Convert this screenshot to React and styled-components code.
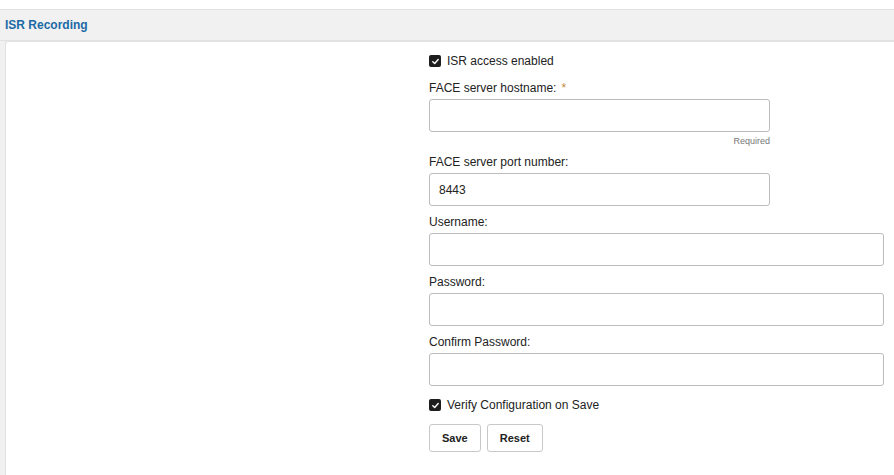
import React from "react";
import styled, { createGlobalStyle } from "styled-components";

const GlobalStyle = createGlobalStyle`
  html, body {
    margin: 0;
    padding: 0;
    background: #ffffff;
    font-family: "Liberation Sans", Arial, sans-serif;
    color: #222;
  }
`;

const Page = styled.div`
  padding-top: 9px;
  width: 894px;
  height: 475px;
  box-sizing: border-box;
  overflow: hidden;
`;

const Section = styled.section`
  background: #f1f1f1;
  border-top: 1px solid #e2e2e2;
  padding-left: 5px;
  height: 100%;
`;

const Header = styled.div`
  height: 30px;
  display: flex;
  align-items: center;
  border-bottom: 1px solid #e2e2e2;
  margin-left: -5px;
  padding-left: 5px;
`;

const Title = styled.h2`
  margin: 0;
  font-size: 12px;
  font-weight: bold;
  color: #1b6aa5;
`;

const Panel = styled.div`
  background: #fff;
  border-left: 1px solid #e2e2e2;
  border-top: 1px solid #e2e2e2;
  border-top-left-radius: 3px;
  height: 100%;
  display: flex;
`;

const Spacer = styled.div`
  width: 423px;
  flex-shrink: 0;
`;

const Form = styled.form`
  width: 455px;
  padding-top: 11px;
  display: flex;
  flex-direction: column;
`;

const CheckRow = styled.label`
  display: flex;
  align-items: center;
  gap: 6px;
  height: 16px;
  font-size: 12px;
  margin-bottom: ${(p) => p.$mb || 0}px;
`;

const Box = styled.span`
  width: 12px;
  height: 12px;
  border-radius: 2px;
  background: #1e1e1e;
  display: inline-flex;
  align-items: center;
  justify-content: center;
`;

const Field = styled.div`
  display: flex;
  flex-direction: column;
  width: ${(p) => (p.$half ? "341px" : "455px")};
  margin-bottom: ${(p) => (p.$mb !== undefined ? p.$mb : 8)}px;
`;

const Label = styled.div`
  font-size: 12px;
  line-height: 16px;
  margin-bottom: 3px;
`;

const Star = styled.span`
  color: #c4883f;
  margin-left: 5px;
`;

const Input = styled.input`
  box-sizing: border-box;
  height: 33px;
  width: 100%;
  border: 1px solid #bcbcbc;
  border-radius: 3px;
  padding: 0 9px;
  font-family: "Liberation Sans", Arial, sans-serif;
  font-size: 12px;
  color: #222;
  outline: none;
`;

const Hint = styled.div`
  text-align: right;
  font-size: 9px;
  color: #777;
  line-height: 14px;
  margin-top: 2px;
`;

const Buttons = styled.div`
  display: flex;
  gap: 6px;
  margin-top: 11px;
`;

const Button = styled.button`
  height: 28px;
  padding: 0 ${(p) => p.$px || 12}px;
  background: #fff;
  border: 1px solid #c8c8c8;
  border-radius: 3px;
  font-family: "Liberation Sans", Arial, sans-serif;
  font-size: 11px;
  font-weight: bold;
  color: #222;
  cursor: pointer;
`;

const Check = () => (
  <Box>
    <svg width="9" height="9" viewBox="0 0 10 10">
      <path d="M2 5.2 L4.1 7.2 L8 2.8" fill="none" stroke="#fff" strokeWidth="1.6" strokeLinecap="round" strokeLinejoin="round" />
    </svg>
  </Box>
);

export default function App() {
  return (
    <>
      <GlobalStyle />
      <Page>
        <Section>
          <Header>
            <Title>ISR Recording</Title>
          </Header>
          <Panel>
            <Spacer />
            <Form>
              <CheckRow $mb={11}>
                <Check />
                ISR access enabled
              </CheckRow>
              <Field $half $mb={6}>
                <Label>
                  FACE server hostname:<Star>*</Star>
                </Label>
                <Input />
                <Hint>Required</Hint>
              </Field>
              <Field $half>
                <Label>FACE server port number:</Label>
                <Input defaultValue="8443" />
              </Field>
              <Field>
                <Label>Username:</Label>
                <Input />
              </Field>
              <Field>
                <Label>Password:</Label>
                <Input type="password" />
              </Field>
              <Field $mb={11}>
                <Label>Confirm Password:</Label>
                <Input type="password" />
              </Field>
              <CheckRow>
                <Check />
                Verify Configuration on Save
              </CheckRow>
              <Buttons>
                <Button>Save</Button>
                <Button>Reset</Button>
              </Buttons>
            </Form>
          </Panel>
        </Section>
      </Page>
    </>
  );
}
